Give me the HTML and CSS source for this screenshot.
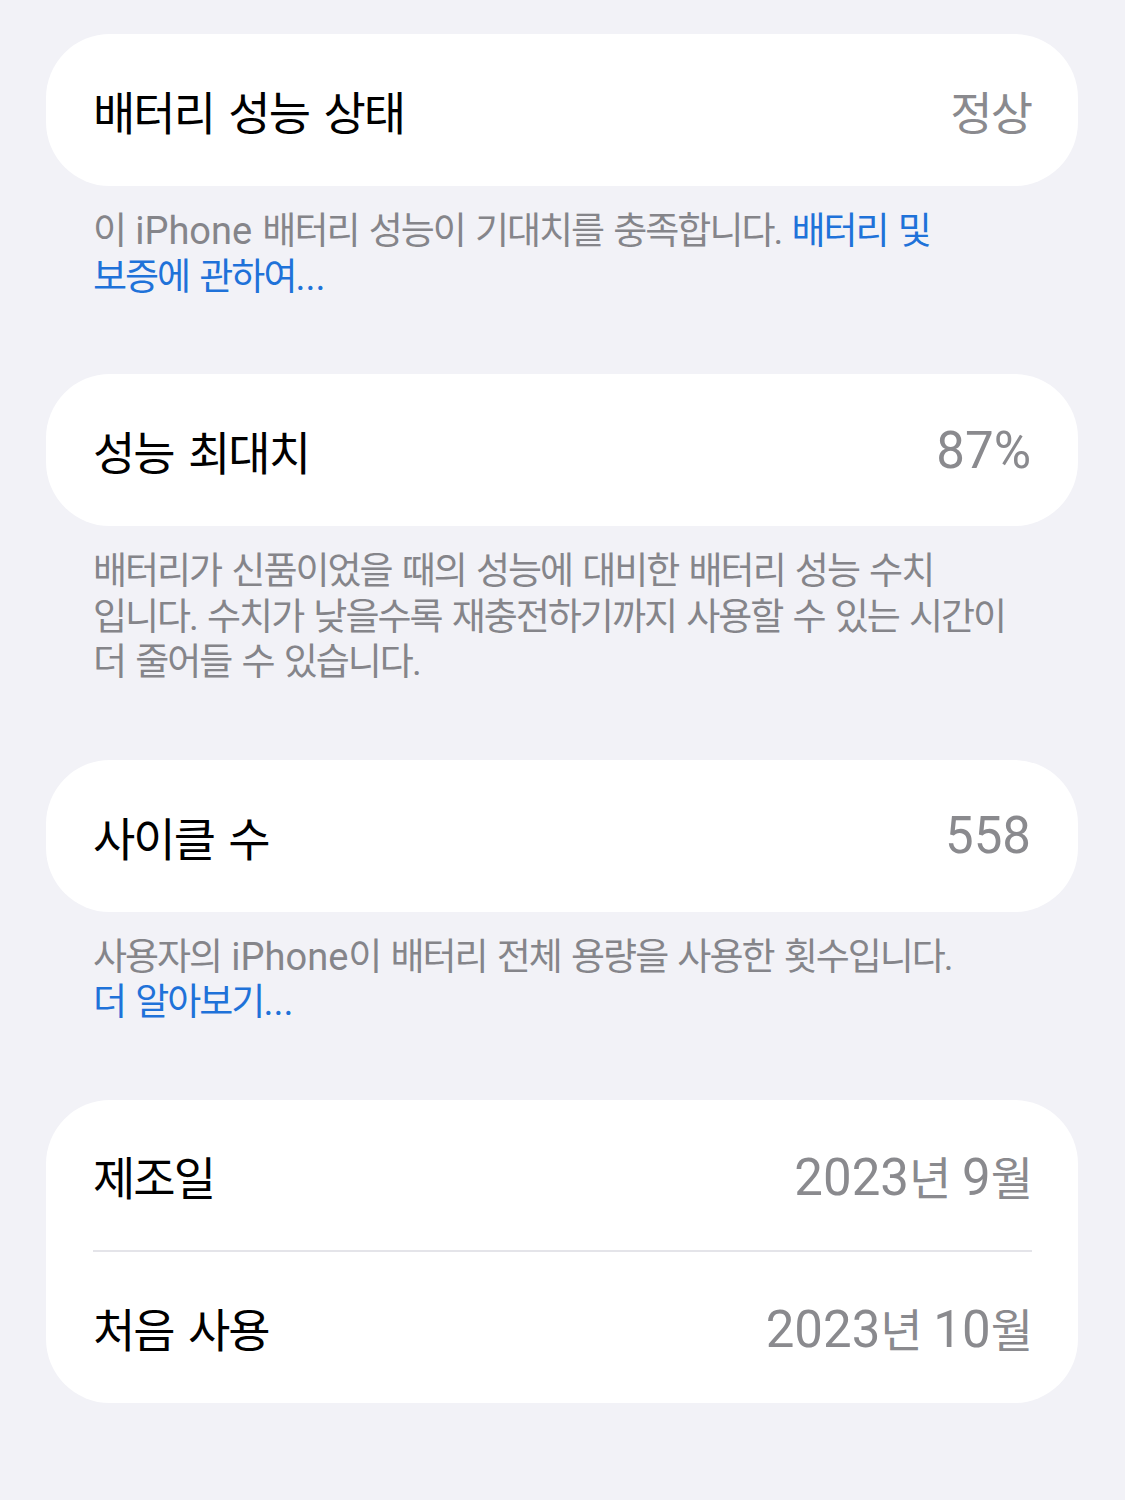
FILE: index.html
```html
<!DOCTYPE html>
<html lang="ko">
<head>
<meta charset="utf-8">
<title>배터리 성능 상태</title>
<link rel="stylesheet" href="styles.css">
</head>
<body>
<main class="page">
  <section class="group">
    <div class="card">
      <div class="row">
        <span class="label">배터리 성능 상태</span>
        <span class="value"><span class="ko">정상</span></span>
      </div>
    </div>
    <p class="note">이 <span class="en">iPhone</span> 배터리 성능이 기대치를 충족합니다. <a class="link" href="#">배터리 및<br>보증에 관하여<span class="en">...</span></a></p>
  </section>

  <section class="group">
    <div class="card">
      <div class="row">
        <span class="label">성능 최대치</span>
        <span class="value">87%</span>
      </div>
    </div>
    <p class="note">배터리가 신품이었을 때의 성능에 대비한 배터리 성능 수치<br>입니다. 수치가 낮을수록 재충전하기까지 사용할 수 있는 시간이<br>더 줄어들 수 있습니다.</p>
  </section>

  <section class="group">
    <div class="card">
      <div class="row">
        <span class="label">사이클 수</span>
        <span class="value">558</span>
      </div>
    </div>
    <p class="note">사용자의 <span class="en">iPhone</span>이 배터리 전체 용량을 사용한 횟수입니다.<br><a class="link" href="#">더 알아보기<span class="en">...</span></a></p>
  </section>

  <section class="group">
    <div class="card">
      <div class="row row-split">
        <span class="label">제조일</span>
        <span class="value">2023<span class="ko">년</span> 9<span class="ko">월</span></span>
      </div>
      <div class="divider"></div>
      <div class="row row-split">
        <span class="label">처음 사용</span>
        <span class="value">2023<span class="ko">년</span> 10<span class="ko">월</span></span>
      </div>
    </div>
  </section>
</main>
</body>
</html>
```

FILE: styles.css
```css
html, body {
  margin: 0;
  padding: 0;
  background: #f2f2f7;
}

body {
  font-family: "Roboto", "Noto Sans CJK KR", sans-serif;
  -webkit-font-smoothing: antialiased;
}

.page {
  padding: 34px 47px 0 46px;
  display: flex;
  flex-direction: column;
}

.group {
  margin-bottom: 74px;
}

.card {
  background: #ffffff;
  border-radius: 64px;
  overflow: hidden;
}

.row {
  height: 152px;
  display: flex;
  align-items: center;
  justify-content: space-between;
  padding: 0 47px 0 47px;
}

.row-split {
  height: 150.5px;
}

.label {
  font-size: 46px;
  letter-spacing: -2px;
  word-spacing: 5px;
  color: #000000;
  white-space: nowrap;
}

.value {
  font-size: 51px;
  color: #8a8a8e;
  white-space: nowrap;
}

.value .ko {
  font-size: 46px;
  letter-spacing: -2px;
}

.divider {
  height: 2px;
  background: #e4e4e9;
  margin: 0 46px 0 47px;
}

.note {
  margin: 0;
  padding: 23px 47px 0 47px;
  font-size: 37px;
  line-height: 45.5px;
  letter-spacing: -2px;
  word-spacing: 3px;
  color: #85858a;
  white-space: nowrap;
}

.note .en {
  font-size: 38px;
  letter-spacing: 0;
}

.link {
  color: #1f72d9;
  text-decoration: none;
}
```
